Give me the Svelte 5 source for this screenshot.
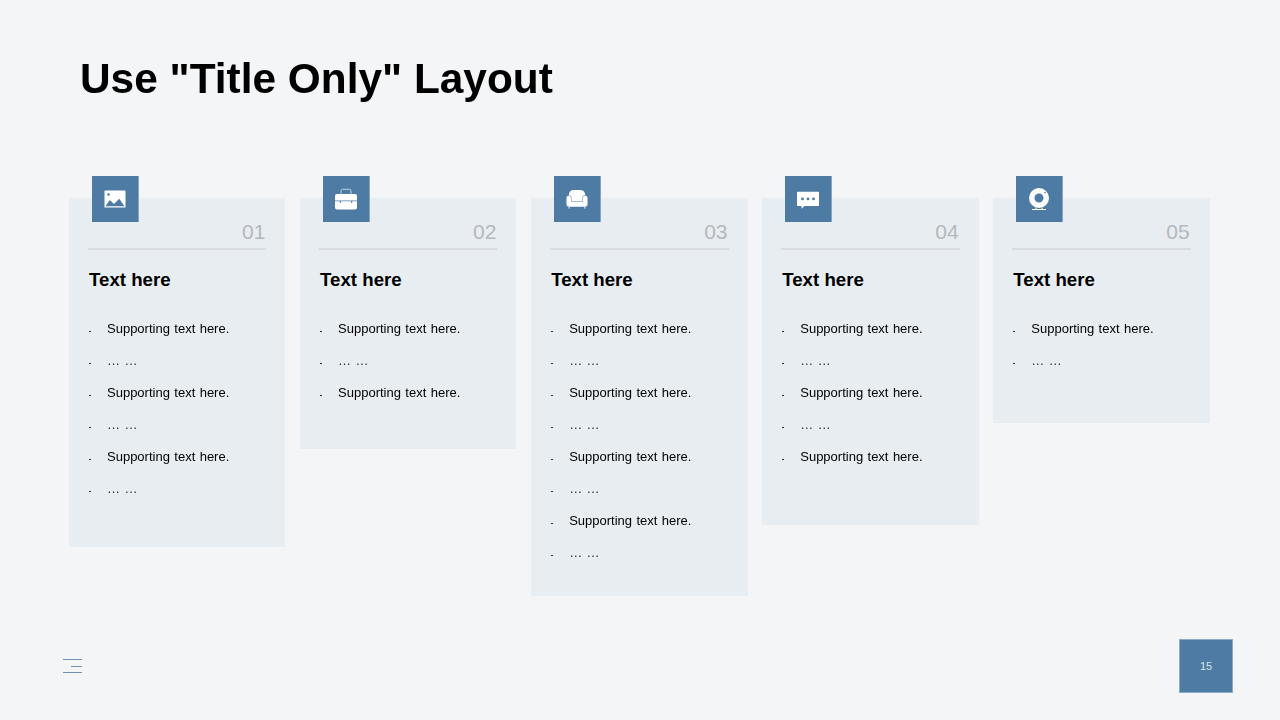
<script>
  const cards = [
    { num: "01", icon: "image", height: 349, rows: 6 },
    { num: "02", icon: "case", height: 251, rows: 3 },
    { num: "03", icon: "sofa", height: 398, rows: 8 },
    { num: "04", icon: "chat", height: 327, rows: 5 },
    { num: "05", icon: "cam", height: 225, rows: 2 }
  ];

  function lines(n) {
    return Array.from({ length: n }, (_, i) => (i % 2 === 0 ? "Supporting text here." : "… …"));
  }
</script>

<div class="slide">
  <h1>Use "Title Only" Layout</h1>

  <div class="cards">
    {#each cards as card}
      <section class="card" style="height: {card.height}px">
        <div class="badge">
          <svg viewBox="0 0 24 24" width="24" height="24" fill="#fff">
            {#if card.icon === "image"}
              <path fill-rule="evenodd" d="M2.200 3.600h19.600a.7.700 0 0 1 .7.700v16.300h-21V4.300a.7.700 0 0 1 .7-.7zM5.500 6.200a1.300 1.300 0 1 0 0 2.600 1.300 1.300 0 0 0 0-2.600zM2.500 19.200h19l-5.300-7.500-5.200 5.300-4.200-4z" />
            {:else if card.icon === "case"}
              <path d="M1 9a2 2 0 0 1 2-2h18a2 2 0 0 1 2 2v4.500H1zM1 14.200h4.800v1.800h1v-1.800h10.400v1.800h1v-1.800H23V20.500a2 2 0 0 1-2 2H3a2 2 0 0 1-2-2z" />
              <path d="M7 7V3.800A1.500 1.500 0 0 1 8.500 2.300h7A1.500 1.500 0 0 1 17 3.800V7" fill="none" stroke="#dbe4ec" stroke-width=".8" />
            {:else if card.icon === "sofa"}
              <path d="M3.800 9C3.800 5 5.500 3 9 3h6c3.500 0 5.200 2 5.200 6v6H3.800z" />
              <path d="M1.200 11a2.600 2.600 0 0 1 5.200 0v3.500h11.200V11a2.600 2.600 0 0 1 5.200 0v6a3 3 0 0 1-3 3H4.200a3 3 0 0 1-3-3z" stroke="#4d7ba4" stroke-width=".5" />
              <path d="M3.500 20h1.200l-.3 1.800h-.6zM19.300 20h1.200l-.3 1.800h-.6z" />
            {:else if card.icon === "chat"}
              <path fill-rule="evenodd" d="M1.500 4.700h21a.5.500 0 0 1 .5.500v13.400a.5.500 0 0 1-.5.500H8.500l-3 2.700V19.100h-4a.5.500 0 0 1-.5-.5V5.200a.5.500 0 0 1 .5-.5zM6.500 10.500a1.400 1.400 0 1 0 0 2.800 1.400 1.400 0 0 0 0-2.800zM12 10.500a1.400 1.400 0 1 0 0 2.800 1.400 1.400 0 0 0 0-2.800zM17.500 10.500a1.400 1.400 0 1 0 0 2.800 1.400 1.400 0 0 0 0-2.800z" />
            {:else}
              <path fill-rule="evenodd" d="M12 1a10 10 0 1 1 0 20 10 10 0 0 1 0-20zM12 6.500a4.500 4.500 0 1 0 0 9 4.500 4.500 0 0 0 0-9zM18 4.800a.8.800 0 1 0 0 1.600.8.800 0 0 0 0-1.600z" />
              <path d="M8.500 20.500h1v1.500h-1zM14.500 20.500h1v1.500h-1zM5 22h14v1H5z" />
            {/if}
          </svg>
        </div>
        <div class="num">{card.num}</div>
        <h2>Text here</h2>
        <ul>
          {#each lines(card.rows) as line}
            <li class:dots={line === "… …"}>{line}</li>
          {/each}
        </ul>
      </section>
    {/each}
  </div>

  <footer>
    <div class="menu"><i></i><i class="short"></i><i></i></div>
    <div class="page">15</div>
  </footer>
</div>

<style>
  :global(body) {
    margin: 0;
    background: #f4f5f7;
  }

  .slide {
    width: 1280px;
    height: 720px;
    box-sizing: border-box;
    padding: 54px 47px 27px 69px;
    display: flex;
    flex-direction: column;
    font-family: "Liberation Sans", Arial, sans-serif;
    color: #000;
    overflow: hidden;
  }

  h1 {
    margin: 0 0 0 11px;
    height: 144px;
    font-size: 42.400px;
    line-height: 50px;
    font-weight: 700;
    will-change: opacity;
  }

  .cards {
    display: flex;
    align-items: flex-start;
    gap: 14.700px;
    flex: 1;
  }

  .card {
    position: relative;
    width: 216.400px;
    box-sizing: border-box;
    padding: 20px 19px 0;
    background: #e8edf1;
  }

  .badge {
    position: absolute;
    left: 23px;
    top: -22px;
    width: 47px;
    height: 46px;
    box-sizing: border-box;
    border-right: 1px solid #87a6c2;
    background: #4d7ba4;
    display: flex;
    align-items: center;
    justify-content: center;
  }

  .num {
    height: 30px;
    padding-right: 1px;
    border-bottom: 2px solid #d8dce1;
    text-align: right;
    font-size: 21px;
    line-height: 28px;
    color: #b4b8bd;
  }

  h2 {
    margin: 17px 0 0 1px;
    font-size: 18.670px;
    line-height: 26px;
    font-weight: 700;
  }

  ul {
    list-style: none;
    margin: 27.500px 0 0;
    padding: 0 0 0 19px;
    will-change: opacity;
  }

  li {
    position: relative;
    height: 32.100px;
    font-size: 13px;
    line-height: 16px;
    word-spacing: 0.800px;
  }

  li::before {
    content: "";
    position: absolute;
    left: -18px;
    top: 10px;
    width: 2px;
    height: 1px;
    background: #333;
  }

  .dots {
    color: #333;
  }

  footer {
    display: flex;
    justify-content: space-between;
    align-items: flex-end;
  }

  .menu {
    display: flex;
    flex-direction: column;
    align-items: flex-end;
    gap: 5.500px;
    width: 19px;
    margin: 0 0 20px -6px;
  }

  .menu i {
    display: block;
    width: 19px;
    height: 1px;
    background: #7090b3;
  }

  .menu i.short {
    width: 11px;
  }

  .page {
    width: 54px;
    height: 54px;
    box-sizing: border-box;
    border: 1px solid #8eabc6;
    background: #4d7ba4;
    color: #dbe4ec;
    font-size: 11px;
    display: flex;
    align-items: center;
    justify-content: center;
  }
</style>
